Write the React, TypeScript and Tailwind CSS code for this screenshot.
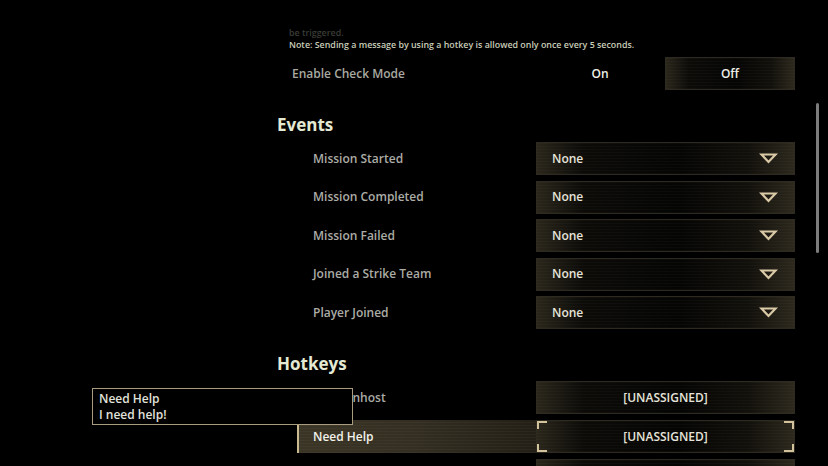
import React from "react";

const events = ["Mission Started", "Mission Completed", "Mission Failed", "Joined a Strike Team", "Player Joined"];

const boxBg =
  "bg-[repeating-linear-gradient(0deg,rgba(255,255,255,0.025)_0px,rgba(255,255,255,0.025)_1px,transparent_1px,transparent_3px),linear-gradient(90deg,#2a261b_0%,#0c0b08_18%,#050504_55%,#12100b_82%,#2c281d_100%)]";

function Caret() {
  return (
    <svg width="19" height="11" viewBox="0 0 19 11" fill="none">
      <path d="M2.5 1.5 L16.5 1.5 L9.5 9 Z" stroke="#d9c9a6" strokeWidth="2.2" strokeLinejoin="miter" />
    </svg>
  );
}

function Dropdown({ value }: { value: string }) {
  return (
    <div className={`flex h-[33px] w-[259px] items-center justify-between border border-[#2e2a20] pl-[15px] pr-[16px] ${boxBg}`}>
      <span className="text-[12px] font-semibold text-[#e6e4da]">{value}</span>
      <Caret />
    </div>
  );
}

function Corners() {
  return (
    <>
      <span className="absolute left-0 top-0 h-[8px] w-[10px] border-l-2 border-t-2 border-[#d3c39c]" />
      <span className="absolute right-0 top-0 h-[8px] w-[10px] border-r-2 border-t-2 border-[#d3c39c]" />
      <span className="absolute bottom-0 left-0 h-[8px] w-[10px] border-b-2 border-l-2 border-[#d3c39c]" />
      <span className="absolute bottom-0 right-0 h-[8px] w-[10px] border-b-2 border-r-2 border-[#d3c39c]" />
    </>
  );
}

function HotkeyBox({ active, label }: { active?: boolean; label?: string }) {
  return (
    <div className={`relative flex h-[33px] w-[259px] items-center justify-center border border-[#2e2a20] ${boxBg}`}>
      {active && <Corners />}
      {label && <span className="text-[12px] font-semibold text-[#e6e4da]">{label}</span>}
    </div>
  );
}

export default function App() {
  return (
    <div
      className="relative h-[466px] w-[828px] overflow-hidden bg-black"
      style={{ fontFamily: "'Open Sans', Lato, sans-serif" }}
    >
      <div className="ml-[277px] flex w-[518px] flex-col">
        {/* faded scrolled-off line */}
        <div className="mt-[27px] h-[12px] pl-[12px] text-[8.9px] font-semibold leading-[12px] text-[#3a3c35]">
          be triggered.
        </div>
        <div className="pl-[12px] text-[8.9px] font-semibold leading-[12px] text-[#c9ccb9]">
          Note: Sending a message by using a hotkey is allowed only once every 5 seconds.
        </div>

        <div className="mt-[6px] flex h-[33px] items-center">
          <span className="flex-1 pl-[15px] text-[12px] font-semibold text-[#a9a9a2]">Enable Check Mode</span>
          <span className="w-[130px] text-center text-[12px] font-semibold text-[#efefe8]">On</span>
          <div className={`flex h-[33px] w-[130px] items-center justify-center border border-[#2e2a20] ${boxBg}`}>
            <span className="text-[12px] font-semibold text-[#efefe8]">Off</span>
          </div>
        </div>

        <h2 className="mt-[23px] h-[24px] text-[17px] font-bold leading-[24px] text-[#e4e9d4]">Events</h2>

        <div className="mt-[5px] flex flex-col gap-[5.5px]">
          {events.map((e) => (
            <div key={e} className="flex h-[33px] items-center">
              <span className="flex-1 pl-[36px] text-[12px] font-semibold text-[#acaca6]">{e}</span>
              <Dropdown value="None" />
            </div>
          ))}
        </div>

        <h2 className="mt-[23px] h-[24px] text-[17px] font-bold leading-[24px] text-[#e4e9d4]">Hotkeys</h2>

        <div className="mt-[5px] flex flex-col gap-[6px]">
          <div className="flex h-[33px] items-center">
            <span className="flex-1 pl-[32px] text-[12px] font-semibold text-[#acaca6]">Open Unhost</span>
            <HotkeyBox label="[UNASSIGNED]" />
          </div>
          <div className="flex h-[33px] items-center">
            <div className="ml-[20px] flex h-[33px] flex-1 items-center border-l-2 border-[#c8b98f] bg-[repeating-linear-gradient(0deg,rgba(255,255,255,0.03)_0px,rgba(255,255,255,0.03)_1px,transparent_1px,transparent_3px),linear-gradient(90deg,#3b3526_0%,#332e21_50%,#241f16_100%)] pl-[14px]">
              <span className="text-[12px] font-semibold text-[#f2f1ea]">Need Help</span>
            </div>
            <HotkeyBox active label="[UNASSIGNED]" />
          </div>
          <div className="flex h-[33px] items-center">
            <span className="flex-1" />
            <HotkeyBox />
          </div>
        </div>
      </div>

      {/* scrollbar */}
      <div className="absolute left-[816px] top-[103px] h-[150px] w-[3px] rounded-full bg-[#7c7c7c]" />

      {/* tooltip */}
      <div className="absolute left-[92px] top-[388px] flex h-[37px] w-[261px] flex-col justify-center border border-[#a99b7d] bg-black pl-[6px]">
        <span className="text-[12px] font-semibold leading-[16px] text-[#e2e2dc]">Need Help</span>
        <span className="text-[12px] font-semibold leading-[16px] text-[#e2e2dc]">I need help!</span>
      </div>
    </div>
  );
}
